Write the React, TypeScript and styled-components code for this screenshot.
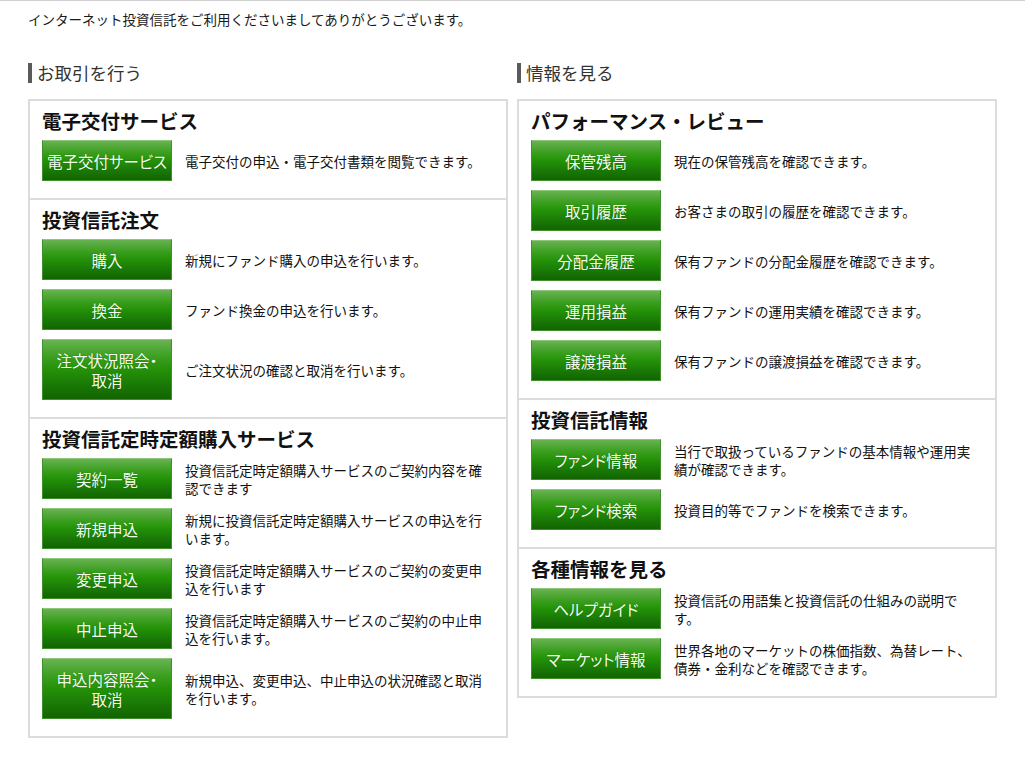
import styled, { createGlobalStyle } from 'styled-components';

const GlobalStyle = createGlobalStyle`
  html, body {
    margin: 0;
    padding: 0;
    background: #fff;
  }
  body {
    font-family: "Noto Sans CJK JP", "Noto Sans", sans-serif;
    color: #111;
  }
`;

const Shell = styled.div`
  border-top: 1px solid #cfcfcf;
`;

const Page = styled.div`
  padding: 9px 0 24px 28px;
  width: 997px;
  box-sizing: border-box;
`;

const Intro = styled.p`
  margin: 0;
  font-size: 13.5px;
  line-height: 19px;
  color: #1a1a1a;
`;

const Columns = styled.div`
  display: grid;
  grid-template-columns: 480px 480px;
  gap: 9px;
  align-items: start;
  margin-top: 33px;
`;

const Column = styled.section`
  display: flex;
  flex-direction: column;
`;

const ColumnTitle = styled.h2`
  margin: 0 0 16px;
  display: flex;
  align-items: center;
  gap: 5px;
  font-size: 17.5px;
  font-weight: 400;
  line-height: 21px;
  color: #333;

  &::before {
    content: '';
    width: 4px;
    height: 20px;
    background: #5a5a5a;
  }
`;

const Panel = styled.div`
  border: 2px solid #dcdcdc;
  background: #fff;
`;

const Block = styled.div`
  padding: 8px 12px 17px;

  & + & {
    border-top: 2px solid #dcdcdc;
  }
`;

const BlockTitle = styled.h3`
  margin: 0 0 8px;
  font-size: 19.5px;
  line-height: 23px;
  font-weight: 700;
  color: #111;
`;

const Rows = styled.div`
  display: flex;
  flex-direction: column;
  gap: 9px;
`;

const Row = styled.div`
  display: flex;
  align-items: center;
  gap: 13px;
`;

const GreenButton = styled.a`
  flex: 0 0 130px;
  box-sizing: border-box;
  min-height: 41px;
  padding: 9.5px 0;
  display: flex;
  align-items: center;
  justify-content: center;
  text-align: center;
  white-space: nowrap;
  font-size: 15.5px;
  line-height: 20px;
  font-feature-settings: "palt";
  color: #f4fff0;
  text-shadow: 0 0 1px rgba(0, 60, 0, 0.6);
  text-decoration: none;
  cursor: pointer;
  border: 1px solid #3f8f2c;
  border-top-color: #8cc878;
  background: linear-gradient(
    to bottom,
    #68b352 0%,
    #3a9e1e 30%,
    #249208 50%,
    #1a7a06 75%,
    #126400 100%
  );
`;

const Desc = styled.p`
  margin: 0;
  flex: 1;
  font-size: 13.5px;
  line-height: 18px;
  color: #111;
`;

type Item = { label: string; desc: string };
type Group = { title: string; items: Item[] };

const left: Group[] = [
  {
    title: '電子交付サービス',
    items: [{ label: '電子交付サービス', desc: '電子交付の申込・電子交付書類を閲覧できます。' }],
  },
  {
    title: '投資信託注文',
    items: [
      { label: '購入', desc: '新規にファンド購入の申込を行います。' },
      { label: '換金', desc: 'ファンド換金の申込を行います。' },
      { label: '注文状況照会・\n取消', desc: 'ご注文状況の確認と取消を行います。' },
    ],
  },
  {
    title: '投資信託定時定額購入サービス',
    items: [
      { label: '契約一覧', desc: '投資信託定時定額購入サービスのご契約内容を確認できます' },
      { label: '新規申込', desc: '新規に投資信託定時定額購入サービスの申込を行います。' },
      { label: '変更申込', desc: '投資信託定時定額購入サービスのご契約の変更申込を行います' },
      { label: '中止申込', desc: '投資信託定時定額購入サービスのご契約の中止申込を行います。' },
      { label: '申込内容照会・\n取消', desc: '新規申込、変更申込、中止申込の状況確認と取消を行います。' },
    ],
  },
];

const right: Group[] = [
  {
    title: 'パフォーマンス・レビュー',
    items: [
      { label: '保管残高', desc: '現在の保管残高を確認できます。' },
      { label: '取引履歴', desc: 'お客さまの取引の履歴を確認できます。' },
      { label: '分配金履歴', desc: '保有ファンドの分配金履歴を確認できます。' },
      { label: '運用損益', desc: '保有ファンドの運用実績を確認できます。' },
      { label: '譲渡損益', desc: '保有ファンドの譲渡損益を確認できます。' },
    ],
  },
  {
    title: '投資信託情報',
    items: [
      { label: 'ファンド情報', desc: '当行で取扱っているファンドの基本情報や運用実績が確認できます。' },
      { label: 'ファンド検索', desc: '投資目的等でファンドを検索できます。' },
    ],
  },
  {
    title: '各種情報を見る',
    items: [
      { label: 'ヘルプガイド', desc: '投資信託の用語集と投資信託の仕組みの説明です。' },
      { label: 'マーケット情報', desc: '世界各地のマーケットの株価指数、為替レート、債券・金利などを確認できます。' },
    ],
  },
];

function ButtonLabel({ text }: { text: string }) {
  const parts = text.split('\n');
  return (
    <span>
      {parts.map((p, i) => (
        <span key={i}>
          {p}
          {i < parts.length - 1 && <br />}
        </span>
      ))}
    </span>
  );
}

function GroupPanel({ groups }: { groups: Group[] }) {
  return (
    <Panel>
      {groups.map((g) => (
        <Block key={g.title}>
          <BlockTitle>{g.title}</BlockTitle>
          <Rows>
            {g.items.map((it) => (
              <Row key={it.label}>
                <GreenButton>
                  <ButtonLabel text={it.label} />
                </GreenButton>
                <Desc>{it.desc}</Desc>
              </Row>
            ))}
          </Rows>
        </Block>
      ))}
    </Panel>
  );
}

export default function App() {
  return (
    <Shell>
      <GlobalStyle />
      <Page>
        <Intro>インターネット投資信託をご利用くださいましてありがとうございます。</Intro>
        <Columns>
          <Column>
            <ColumnTitle>お取引を行う</ColumnTitle>
            <GroupPanel groups={left} />
          </Column>
          <Column>
            <ColumnTitle>情報を見る</ColumnTitle>
            <GroupPanel groups={right} />
          </Column>
        </Columns>
      </Page>
    </Shell>
  );
}
